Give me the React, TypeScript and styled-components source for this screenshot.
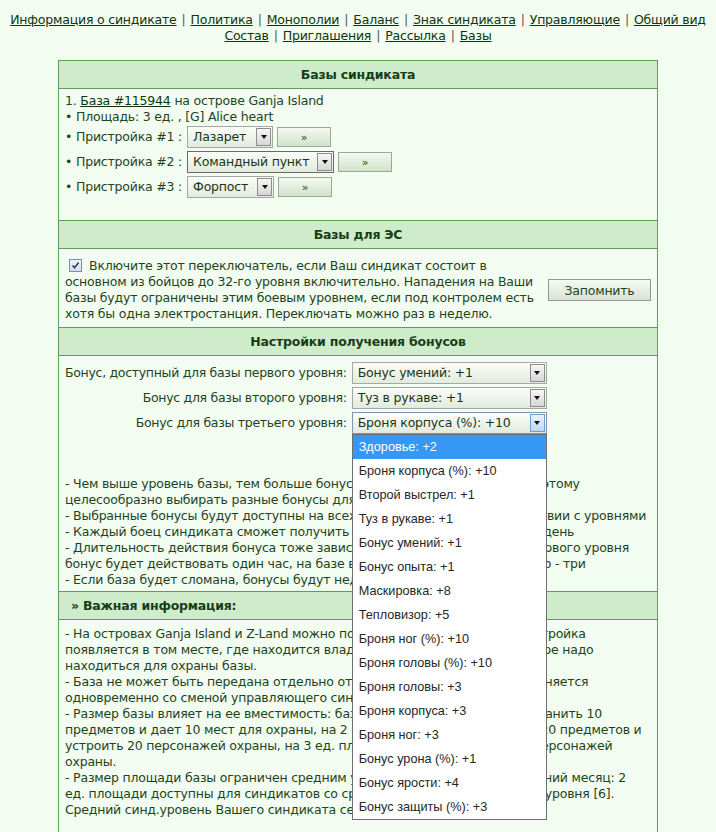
import React from "react";
import styled, { createGlobalStyle, css } from "styled-components";

const GlobalStyle = createGlobalStyle`
  html, body {
    margin: 0;
    background: #f2fcf0;
  }
  body {
    font-family: "DejaVu Sans", Verdana, sans-serif;
    font-size: 12.5px;
    letter-spacing: -0.2px;
    line-height: 16px;
    color: #1d451d;
  }
  button {
    letter-spacing: -0.2px;
  }
`;

const line = "#5f9c5a";

const Nav = styled.nav`
  padding-top: 12px;
  text-align: center;
  line-height: 16px;
  white-space: nowrap;
`;

const NavLink = styled.a`
  color: #0e360e;
  text-decoration: underline;
`;

const Sep = styled.span`
  color: #555;
  margin: 0 5px;
`;

const Panel = styled.div`
  width: 600px;
  box-sizing: border-box;
  margin: 16px auto 0;
  border: 1px solid ${line};
`;

const Head = styled.div<{ $left?: boolean }>`
  height: 27px;
  line-height: 27px;
  background: #cfecca;
  font-weight: bold;
  color: #173d17;
  text-align: ${(p) => (p.$left ? "left" : "center")};
  padding: 0 12px;
  border-bottom: 1px solid ${line};
`;

const Body = styled.div<{ $pad: string }>`
  padding: ${(p) => p.$pad};
  border-bottom: 1px solid ${line};
  &:last-child {
    border-bottom: none;
  }
`;

const Line = styled.div`
  white-space: nowrap;
`;

const BuildList = styled.div`
  display: flex;
  flex-direction: column;
  gap: 3px;
  margin-top: 1px;
`;

const BuildRow = styled.div`
  display: flex;
  align-items: center;
  gap: 4px;
  height: 22px;
`;

const BuildLabel = styled.span`
  margin-right: 1px;
`;

const SelectBox = styled.div<{ $w: number; $tone?: "dark" | "open" }>`
  display: inline-flex;
  width: ${(p) => p.$w}px;
  height: 22px;
  box-sizing: border-box;
  border: 1px solid #a2a8a2;
  background: linear-gradient(#fbfdf9, #e2eadd);
  color: #173717;
  ${(p) =>
    p.$tone === "dark" &&
    css`
      border-color: #6a6a6a;
    `}
  ${(p) =>
    p.$tone === "open" &&
    css`
      border-color: #7f97ad;
    `}
`;

const SelectText = styled.span`
  flex: 1;
  padding: 0 5px;
  line-height: 20px;
  white-space: nowrap;
  overflow: hidden;
`;

const Arrow = styled.span<{ $open?: boolean }>`
  width: 15px;
  margin: 1px;
  box-sizing: border-box;
  border: 1px solid #8d8d8d;
  background: linear-gradient(#f6f6f6, #d6d6d6);
  display: flex;
  align-items: center;
  justify-content: center;
  ${(p) =>
    p.$open &&
    css`
      border-color: #6f9ccc;
      background: linear-gradient(#e8f3fd, #bcd8f3);
    `}
  &::after {
    content: "";
    border-left: 3px solid transparent;
    border-right: 3px solid transparent;
    border-top: 4px solid #111;
  }
`;

const GoButton = styled.button`
  width: 54px;
  height: 20px;
  padding: 0;
  border: 1px solid #9ca79c;
  background: linear-gradient(#f4f9f1, #d1e2ca);
  font: 11px "DejaVu Sans", Verdana, sans-serif;
  color: #1d451d;
`;

const EsBody = styled.div`
  display: flex;
  align-items: center;
  padding: 9px 6px 5px;
  border-bottom: 1px solid ${line};
`;

const EsText = styled.div`
  white-space: nowrap;
`;

const Check = styled.span`
  display: inline-block;
  width: 13px;
  height: 13px;
  box-sizing: border-box;
  margin: 0 7px 0 4px;
  vertical-align: -2px;
  border: 1px solid #7d8fa6;
  background: linear-gradient(#eef2f7, #d6dde8);
  position: relative;
  svg {
    position: absolute;
    inset: 1px;
  }
`;

const SaveButton = styled.button`
  width: 103px;
  height: 22px;
  margin-left: auto;
  padding: 0;
  border: 1px solid #8f998f;
  background: linear-gradient(#f6f9f4, #d9e2d4);
  font: 12.5px "DejaVu Sans", Verdana, sans-serif;
  color: #1d451d;
`;

const BonusGrid = styled.div`
  display: grid;
  grid-template-columns: auto 195px;
  column-gap: 5px;
  row-gap: 3px;
  align-items: center;
  justify-content: start;
`;

const BonusLabel = styled.div`
  text-align: right;
  white-space: nowrap;
  letter-spacing: -0.3px;
`;

const DropWrap = styled.div`
  position: relative;
  height: 22px;
`;

const OptionList = styled.ul`
  position: absolute;
  top: 100%;
  left: 0;
  z-index: 5;
  width: 195px;
  box-sizing: border-box;
  margin: 0;
  padding: 0;
  list-style: none;
  background: #fff;
  border: 1px solid #6e6e6e;
  font: 12.7px "Liberation Sans", Arial, sans-serif;
  letter-spacing: 0;
  color: #262626;
`;

const Option = styled.li<{ $active?: boolean }>`
  height: 24px;
  line-height: 24px;
  padding: 0 6px;
  white-space: nowrap;
  ${(p) =>
    p.$active &&
    css`
      background: #3797f5;
      color: #fff;
    `}
`;

const Notes = styled.div`
  margin-top: 42px;
  white-space: nowrap;
`;

const navTop = [
  "Информация о синдикате",
  "Политика",
  "Монополии",
  "Баланс",
  "Знак синдиката",
  "Управляющие",
  "Общий вид",
];
const navBottom = ["Состав", "Приглашения", "Рассылка", "Базы"];

const builds = [
  { n: 1, name: "Лазарет", w: 86 },
  { n: 2, name: "Командный пункт", w: 147, dark: true },
  { n: 3, name: "Форпост", w: 87 },
];

const bonusOptions = [
  "Здоровье: +2",
  "Броня корпуса (%): +10",
  "Второй выстрел: +1",
  "Туз в рукаве: +1",
  "Бонус умений: +1",
  "Бонус опыта: +1",
  "Маскировка: +8",
  "Тепловизор: +5",
  "Броня ног (%): +10",
  "Броня головы (%): +10",
  "Броня головы: +3",
  "Броня корпуса: +3",
  "Броня ног: +3",
  "Бонус урона (%): +1",
  "Бонус ярости: +4",
  "Бонус защиты (%): +3",
];

function NavRow({ items }: { items: string[] }) {
  return (
    <div>
      {items.map((t, i) => (
        <React.Fragment key={t}>
          {i > 0 && <Sep>|</Sep>}
          <NavLink href="#">{t}</NavLink>
        </React.Fragment>
      ))}
    </div>
  );
}

function Select({ value, w, tone }: { value: string; w: number; tone?: "dark" | "open" }) {
  return (
    <SelectBox $w={w} $tone={tone}>
      <SelectText>{value}</SelectText>
      <Arrow $open={tone === "open"} />
    </SelectBox>
  );
}

export default function App() {
  return (
    <>
      <GlobalStyle />
      <Nav>
        <NavRow items={navTop} />
        <NavRow items={navBottom} />
      </Nav>

      <Panel>
        <Head>Базы синдиката</Head>
        <Body $pad="4px 6px 22px">
          <Line>
            1. <NavLink href="#">База #115944</NavLink> на острове Ganja Island
          </Line>
          <Line>• Площадь: 3 ед. , [G] Alice heart</Line>
          <BuildList>
            {builds.map((b) => (
              <BuildRow key={b.n}>
                <BuildLabel>• Пристройка #{b.n} :</BuildLabel>
                <Select value={b.name} w={b.w} tone={b.dark ? "dark" : undefined} />
                <GoButton>»</GoButton>
              </BuildRow>
            ))}
          </BuildList>
        </Body>

        <Head>Базы для ЭС</Head>
        <EsBody>
          <EsText>
            <Check>
              <svg width="9" height="9" viewBox="0 0 9 9">
                <path d="M1.5 4.5 L3.6 6.8 L7.6 1.6" fill="none" stroke="#25406b" strokeWidth="1.6" />
              </svg>
            </Check>
            Включите этот переключатель, если Ваш синдикат состоит в
            <br />
            основном из бойцов до 32-го уровня включительно. Нападения на Ваши
            <br />
            базы будут ограничены этим боевым уровнем, если под контролем есть
            <br />
            хотя бы одна электростанция. Переключать можно раз в неделю.
          </EsText>
          <SaveButton>Запомнить</SaveButton>
        </EsBody>

        <Head>Настройки получения бонусов</Head>
        <Body $pad="6px 6px 3px">
          <BonusGrid>
            <BonusLabel>Бонус, доступный для базы первого уровня:</BonusLabel>
            <Select value="Бонус умений: +1" w={195} />
            <BonusLabel>Бонус для базы второго уровня:</BonusLabel>
            <Select value="Туз в рукаве: +1" w={195} />
            <BonusLabel>Бонус для базы третьего уровня:</BonusLabel>
            <DropWrap>
              <Select value="Броня корпуса (%): +10" w={195} tone="open" />
              <OptionList>
                {bonusOptions.map((o, i) => (
                  <Option key={o} $active={i === 0}>
                    {o}
                  </Option>
                ))}
              </OptionList>
            </DropWrap>
          </BonusGrid>
          <Notes>
            - Чем выше уровень базы, тем больше бонусов можно будет получить, поэтому
            <br />
            целесообразно выбирать разные бонусы для разных уровней баз.
            <br />
            - Выбранные бонусы будут доступны на всех базах синдиката в соответствии с уровнями
            <br />
            - Каждый боец синдиката сможет получить бонусы максимум один раз в день
            <br />
            - Длительность действия бонуса тоже зависит от уровня базы: на базе первого уровня
            <br />
            бонус будет действовать один час, на базе второго - два, на базе третьего - три
            <br />
            - Если база будет сломана, бонусы будут недоступны до её ремонта.
          </Notes>
        </Body>

        <Head $left>» Важная информация:</Head>
        <Body $pad="6px 6px 24px">
          <Line>- На островах Ganja Island и Z-Land можно построить базу синдиката. Постройка</Line>
          <Line>появляется в том месте, где находится владелец базы, и в этом же секторе надо</Line>
          <Line>находиться для охраны базы.</Line>
          <Line>- База не может быть передана отдельно от синдиката, и её владелец меняется</Line>
          <Line>одновременно со сменой управляющего синдиката.</Line>
          <Line>- Размер базы влияет на ее вместимость: база на 1 ед. площади может хранить 10</Line>
          <Line>предметов и дает 10 мест для охраны, на 2 ед. площади можно хранить 20 предметов и</Line>
          <Line>устроить 20 персонажей охраны, на 3 ед. площади - 30 предметов и 30 персонажей</Line>
          <Line>охраны.</Line>
          <Line>- Размер площади базы ограничен средним уровнем синдиката за последний месяц: 2</Line>
          <Line>ед. площади доступны для синдикатов со средним уровнем [5], 3 ед. - от уровня [6].</Line>
          <Line>Средний синд.уровень Вашего синдиката сейчас: 5.73</Line>
        </Body>
      </Panel>
    </>
  );
}
